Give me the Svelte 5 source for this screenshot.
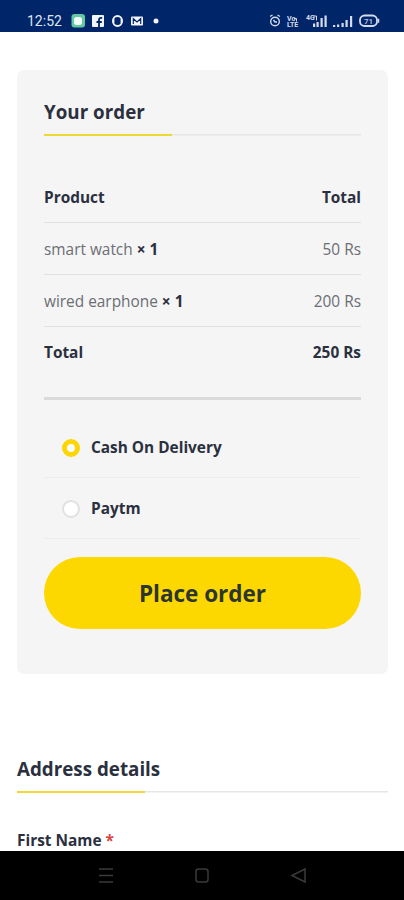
<script>
  const items = [
    { name: "smart watch", qty: 1, price: 50 },
    { name: "wired earphone", qty: 1, price: 200 },
  ]

  const methods = [
    { id: "cod", label: "Cash On Delivery" },
    { id: "paytm", label: "Paytm" },
  ]

  let selected = $state("cod")

  const total = items.reduce((sum, item) => sum + item.price * item.qty, 0)
</script>

<div class="screen">
  <header class="status">
    <span class="time">12:52</span>
    <svg class="apps" width="92" height="14" viewBox="0 0 92 14">
      <rect x="1.5" y="0" width="13.5" height="13.5" rx="3" fill="#62c9a3" />
      <rect x="4" y="3" width="8" height="8" rx="2.5" fill="#effff8" />
      <rect x="22" y="1" width="12" height="12" rx="1" fill="#f3f5fa" />
      <path d="M29 13V5.8q0-2 2-2h1.2M26.5 8h5.3" fill="none" stroke="#002569" stroke-width="1.8" />
      <ellipse cx="47.5" cy="7" rx="4.6" ry="5" fill="none" stroke="#f3f5fa" stroke-width="1.8" />
      <path d="M43.6 4.8v4.4M51.4 4.8v4.4" stroke="#f3f5fa" stroke-width="1.6" />
      <rect x="61" y="2.5" width="12" height="9" rx="1" fill="#f3f5fa" />
      <path d="M63.3 10V4.7L67 8l3.7-3.3V10" fill="none" stroke="#002569" stroke-width="1.2" />
      <circle cx="86" cy="7" r="2.5" fill="#f3f5fa" />
    </svg>
    <svg class="system" width="112" height="14" viewBox="0 0 112 14">
      <g fill="none" stroke="#d5dced" stroke-width="1.4">
        <circle cx="5" cy="7.5" r="4.3" />
        <path d="M0 2.5l2.5-1.5M10 2.5L7.5 1M3.5 6L5 8h2" />
      </g>
      <g class="tiny">
        <text x="17" y="6.5">Vo</text>
        <text x="17" y="13">LTE</text>
        <text x="36" y="6">4G</text>
      </g>
      <path d="M24 4.5h2.5v3M43.5 2h3v4.5" fill="none" stroke="#d5dced" />
      <g fill="#d5dced">
        <path d="M43 9.5h2.2V13H43zM46.5 8h2.2v5h-2.2zM50.5 4h2.2v9h-2.2zM54.5 1.5h2.2V13h-2.2z" />
        <path d="M63 11h2.2v2H63zM67 10.5h2.2V13H67zM71.5 9h2.2v4h-2.2zM75.5 6h2.2v7h-2.2zM80 2h2.2v11H80z" />
      </g>
      <rect x="90" y="1.5" width="17" height="10.5" rx="4.5" fill="none" stroke="#d5dced" stroke-width="1.8" />
      <path d="M108.5 4.8v4" stroke="#d5dced" stroke-width="1.5" />
      <text class="charge" x="94" y="9.7">71</text>
    </svg>
  </header>

  <main>
    <section class="order">
      <h2>Your order</h2>

      <table>
        <thead>
          <tr><th>Product</th><th>Total</th></tr>
        </thead>
        <tbody>
          {#each items as item}
            <tr>
              <td>{item.name} <b>× {item.qty}</b></td>
              <td>{item.price} Rs</td>
            </tr>
          {/each}
        </tbody>
        <tfoot>
          <tr><th>Total</th><th>{total} Rs</th></tr>
        </tfoot>
      </table>

      <div class="methods">
        {#each methods as method}
          <label>
            <input type="radio" name="method" value={method.id} bind:group={selected} />
            {method.label}
          </label>
        {/each}
      </div>

      <button type="button">Place order</button>
    </section>

    <section class="address">
      <h2>Address details</h2>
      <p class="field">First Name <span>*</span></p>
    </section>
  </main>

  <nav>
    <svg width="18" height="18" viewBox="0 0 18 18">
      <path d="M2 3h14M2 9.5h14M2 16h14" />
    </svg>
    <svg width="18" height="18" viewBox="0 0 18 18">
      <rect x="3" y="3" width="12" height="13" rx="2.5" />
    </svg>
    <svg width="18" height="18" viewBox="0 0 18 18">
      <path d="M16 3v13L3 9.5z" />
    </svg>
  </nav>
</div>

<style>
  :global(body) {
    background: #fff;
  }

  .screen {
    display: flex;
    flex-direction: column;
    height: 900px;
    overflow: hidden;
    font-family: "Open Sans", sans-serif;
    font-size: 15.4px;
    color: #2b303e;
  }

  .status {
    display: flex;
    align-items: flex-end;
    flex: none;
    box-sizing: border-box;
    height: 32px;
    padding: 0 22px 4px 27px;
    background: #002569;
    color: #dfe5f2;
  }

  .time {
    width: 43px;
    font: 400 14px/14px Roboto, sans-serif;
  }

  .system {
    margin-left: auto;
  }

  .tiny {
    font: 700 7px Roboto, sans-serif;
    fill: #d5dced;
  }

  .charge {
    font: 700 8px Roboto, sans-serif;
    fill: #aebbd8;
  }

  main {
    flex: 1;
    min-height: 0;
    overflow: hidden;
    padding: 38px 16px 0 17px;
  }

  .order {
    box-sizing: border-box;
    height: 604px;
    padding: 26px 27px 0;
    border-radius: 7px;
    background: #f5f5f5;
  }

  h2 {
    margin: 0;
    height: 38px;
    padding-bottom: 2px;
    font-size: 18.8px;
    font-weight: 700;
    line-height: 32px;
    background:
      linear-gradient(#f0d832, #f0d832) 0 100% / 128px 2.5px no-repeat,
      linear-gradient(#e6e6e6, #e6e6e6) 0 calc(100% - 0.5px) / 100% 1.5px no-repeat;
  }

  table {
    width: 100%;
    margin-top: 35px;
    border-collapse: separate;
    border-spacing: 0;
  }

  th,
  td {
    box-sizing: border-box;
    height: 52px;
    padding: 2px 0 0;
    text-align: left;
    border-bottom: 1px solid #e0e0e0;
  }

  th {
    font-size: 15.4px;
    font-weight: 700;
  }

  td {
    color: #6b6e73;
  }

  th:last-child,
  td:last-child {
    text-align: right;
  }

  b {
    font-weight: 700;
    color: #2b303e;
  }

  tfoot th {
    height: 73px;
    padding: 0 0 20px;
    border-bottom: 3px solid #dadada;
  }

  .methods {
    margin-top: 17px;
  }

  label {
    display: flex;
    align-items: center;
    gap: 11px;
    height: 60px;
    padding-left: 18px;
    border-bottom: 1px solid #ededed;
    font-size: 15.4px;
    font-weight: 700;
  }

  input {
    appearance: none;
    box-sizing: border-box;
    width: 18px;
    height: 18px;
    margin: 2px 0 0;
    border: 2px solid #e1e1e1;
    border-radius: 50%;
    background: #fff;
  }

  input:checked {
    border: 5.5px solid #fbd604;
  }

  button {
    display: block;
    width: 100%;
    height: 72px;
    margin-top: 18px;
    padding: 0;
    border: 0;
    border-radius: 36px;
    background: #fdd800;
    color: #2c3530;
    font: 700 22.5px "Open Sans", sans-serif;
  }

  .address {
    padding-top: 79px;
  }

  .field {
    margin: 36px 0 0;
    font-size: 15.4px;
    font-weight: 700;
    line-height: 24px;
  }

  .field span {
    color: #d9453f;
  }

  nav {
    display: flex;
    justify-content: center;
    gap: 78px;
    flex: none;
    box-sizing: border-box;
    height: 49px;
    padding-top: 15px;
    background: #000;
  }

  nav svg {
    fill: none;
    stroke: #3a3a3a;
    stroke-width: 1.5;
  }
</style>
